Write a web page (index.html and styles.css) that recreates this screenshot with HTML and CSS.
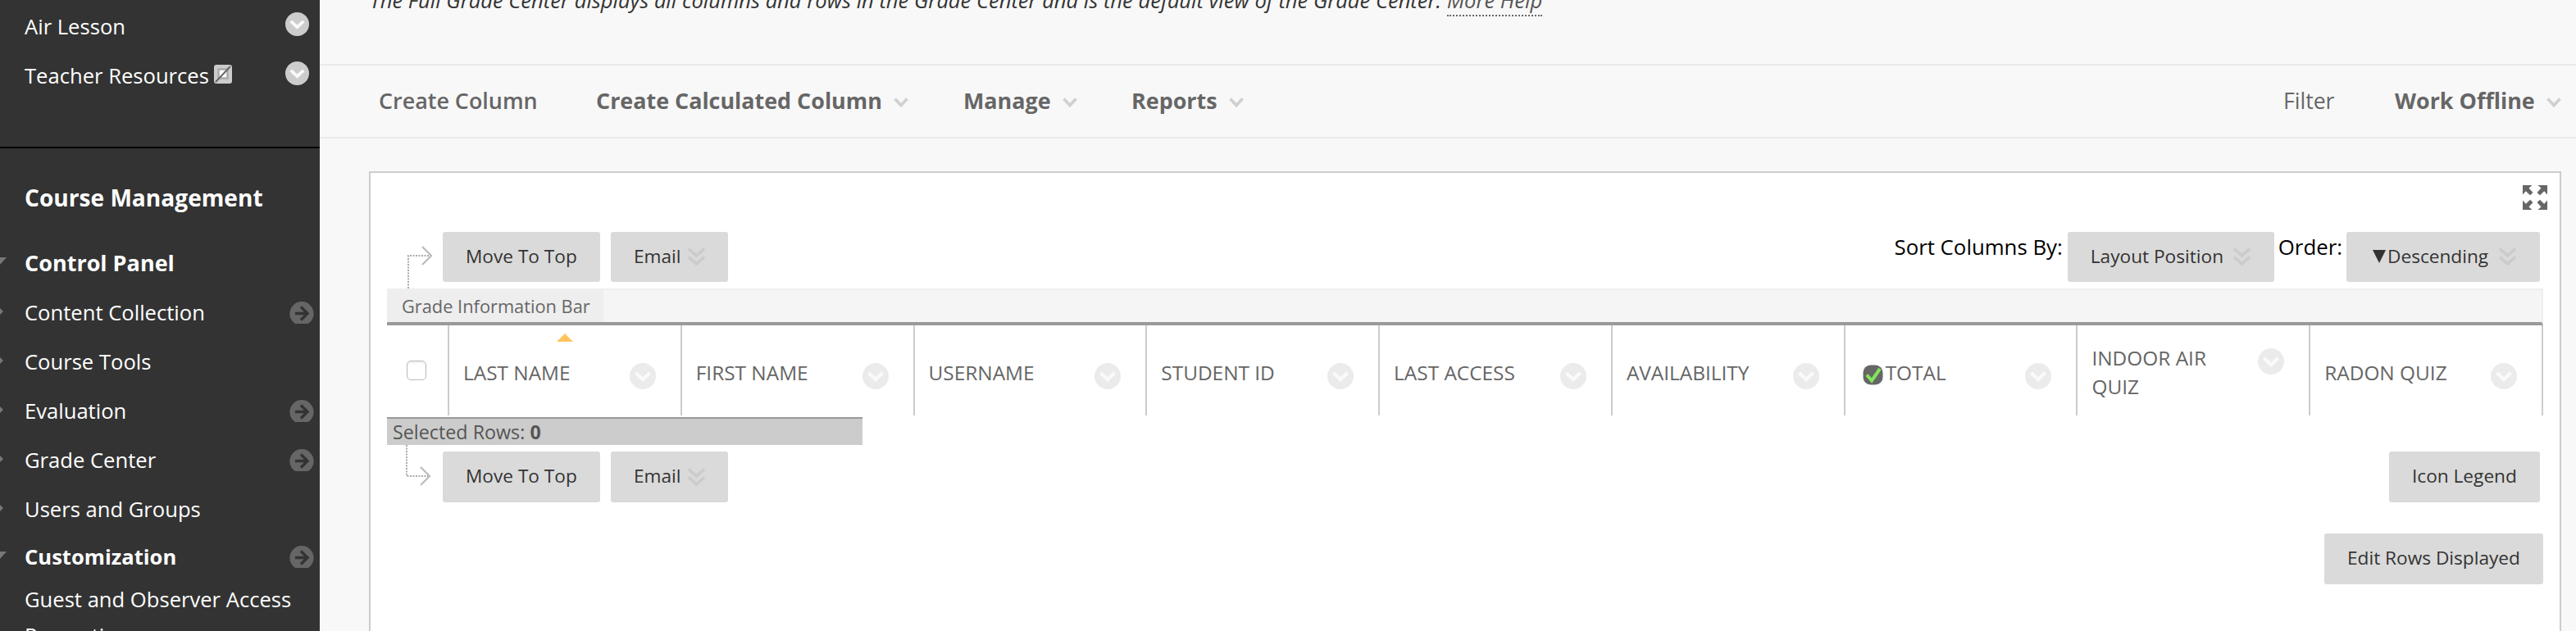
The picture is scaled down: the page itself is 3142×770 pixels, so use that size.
FILE: index.html
```
<!DOCTYPE html>
<html lang="en">
<head>
<meta charset="utf-8">
<title>Full Grade Center</title>
<link rel="stylesheet" href="styles.css">
</head>
<body>
<svg width="0" height="0" class="defs">
  <symbol id="circle-chevron" viewBox="0 0 32 32"><circle cx="16" cy="16" r="16" fill="currentColor"/><path d="M7.500 12l8.500 8 8.500-8" fill="none" stroke="#fafafa" stroke-width="4.200"/></symbol>
  <symbol id="circle-arrow" viewBox="0 0 30 27"><circle cx="15" cy="14.700" r="14.600" fill="#666"/><path d="M7 14.500h15M14 6.500l8 8-8 8" fill="none" stroke="#333" stroke-width="3.400"/></symbol>
  <symbol id="chevron" viewBox="0 0 18 13"><path d="M1.500 1.500L9 9.500l7.500-8" fill="none" stroke="#d0d0d0" stroke-width="3.600"/></symbol>
  <symbol id="double-chevron" viewBox="0 0 21 23"><path d="M1 1.500l9.500 8.500L20 1.500M1 11.500l9.500 8.500L20 11.500" fill="none" stroke="#cbcbcb" stroke-width="3.600"/></symbol>
</svg>
<aside class="sidebar">
  <div class="item first">Air Lesson<svg class="opt"><use href="#circle-chevron"/></svg></div>
  <div class="item">Teacher Resources<svg class="hidden-icon" viewBox="0 0 22 23"><rect width="22" height="23" rx="3" fill="#ccc"/><rect x="5.500" y="5.500" width="11" height="11" fill="#fff" stroke="#aaa" stroke-width="2.500"/><path d="M2 21L20 2" stroke="#666" stroke-width="2"/></svg><svg class="opt"><use href="#circle-chevron"/></svg></div>
  <div class="divider"></div>
  <h2 class="heading">Course Management</h2>
  <div class="item panel-title open">Control Panel</div>
  <div class="item closed">Content Collection<svg class="go"><use href="#circle-arrow"/></svg></div>
  <div class="item closed">Course Tools</div>
  <div class="item closed">Evaluation<svg class="go"><use href="#circle-arrow"/></svg></div>
  <div class="item closed">Grade Center<svg class="go"><use href="#circle-arrow"/></svg></div>
  <div class="item closed">Users and Groups</div>
  <div class="item custom open">Customization<svg class="go"><use href="#circle-arrow"/></svg></div>
  <div class="item sub">Guest and Observer Access</div>
  <div class="item sub last">Properties</div>
</aside>
<main class="main">
  <p class="intro">The Full Grade Center displays all columns and rows in the Grade Center and is the default view of the Grade Center. <a class="help">More Help</a></p>
  <nav class="toolbar">
    <span class="tool create">Create Column</span>
    <span class="tool calc">Create Calculated Column<svg class="chev"><use href="#chevron"/></svg></span>
    <span class="tool manage">Manage<svg class="chev"><use href="#chevron"/></svg></span>
    <span class="tool">Reports<svg class="chev"><use href="#chevron"/></svg></span>
    <span class="tool filter">Filter</span>
    <span class="tool offline">Work Offline<svg class="chev"><use href="#chevron"/></svg></span>
  </nav>
  <section class="panel">
    <div class="expand-row"><svg class="expand" viewBox="0 0 30 30" fill="#666"><path id="corner" d="M0 0h11.500l-4 3.600 5 5.500-3.500 3.200-5.200-5L0 11.500z"/><use href="#corner" transform="matrix(-1 0 0 1 30 0)"/><use href="#corner" transform="matrix(1 0 0 -1 0 30)"/><use href="#corner" transform="matrix(-1 0 0 -1 30 30)"/></svg></div>
    <div class="actions top">
      <svg class="lead" viewBox="0 0 32 54"><path d="M2 53V13H28" fill="none" stroke="#aaa" stroke-width="2" stroke-dasharray="2 1.500"/><path d="M19 2l11 11-11 11" fill="none" stroke="#bbb" stroke-width="2.200"/></svg>
      <span class="btn move">Move To Top</span><span class="btn email">Email<svg class="dbl"><use href="#double-chevron"/></svg></span>
      <span class="label sort">Sort Columns By:</span><span class="btn layout">Layout Position<svg class="dbl"><use href="#double-chevron"/></svg></span>
      <span class="label order">Order:</span><span class="btn desc"><svg class="tri" viewBox="0 0 16 16"><path d="M0 0h16L8 16z" fill="#333"/></svg>Descending<svg class="dbl"><use href="#double-chevron"/></svg></span>
    </div>
    <div class="info-bar"><span class="info-tab">Grade Information Bar</span></div>
    <div class="grid-head">
      <div class="check-cell"><span class="checkbox"></span></div>
      <div class="cell sorted"><span>LAST NAME</span><svg class="menu"><use href="#circle-chevron"/></svg></div>
      <div class="cell"><span>FIRST NAME</span><svg class="menu"><use href="#circle-chevron"/></svg></div>
      <div class="cell"><span>USERNAME</span><svg class="menu"><use href="#circle-chevron"/></svg></div>
      <div class="cell"><span>STUDENT ID</span><svg class="menu"><use href="#circle-chevron"/></svg></div>
      <div class="cell"><span>LAST ACCESS</span><svg class="menu"><use href="#circle-chevron"/></svg></div>
      <div class="cell"><span>AVAILABILITY</span><svg class="menu"><use href="#circle-chevron"/></svg></div>
      <div class="cell total"><svg class="tick" viewBox="0 0 25 25"><rect x=".5" y=".5" width="24" height="24" rx="9" fill="#666"/><path d="M5 12.500l6 7L21 5" fill="none" stroke="#82e55a" stroke-width="4"/></svg><span>TOTAL</span><svg class="menu"><use href="#circle-chevron"/></svg></div>
      <div class="cell two-line"><span>INDOOR AIR<br>QUIZ</span><svg class="menu"><use href="#circle-chevron"/></svg></div>
      <div class="cell"><span>RADON QUIZ</span><svg class="menu"><use href="#circle-chevron"/></svg></div>
    </div>
    <div class="selected">Selected Rows: <b>0</b></div>
    <div class="actions bottom">
      <svg class="lead" viewBox="0 0 32 54"><path d="M2 0V38H28" fill="none" stroke="#aaa" stroke-width="2" stroke-dasharray="2 1.500"/><path d="M19 27l11 11-11 11" fill="none" stroke="#bbb" stroke-width="2.200"/></svg>
      <span class="btn move">Move To Top</span><span class="btn email">Email<svg class="dbl"><use href="#double-chevron"/></svg></span>
      <span class="btn legend">Icon Legend</span>
    </div>
    <div class="rows-row"><span class="btn edit">Edit Rows Displayed</span></div>
  </section>
</main>
</body>
</html>
```
FILE: styles.css
```
* { box-sizing: border-box; }
body { margin: 0; display: flex; width: 3142px; height: 770px; overflow: hidden; background: #f8f8f8; font-family: "Open Sans", sans-serif; }
svg { flex: none; }
.defs { position: absolute; }

/* Course menu */
.sidebar { flex: none; width: 390px; height: 770px; overflow: hidden; background: #333; color: #fff; padding-top: 2px; }
.item { position: relative; display: flex; align-items: center; height: 60px; padding-left: 30px; font-size: 25.6px; white-space: nowrap; }
.opt { width: 29px; height: 29px; margin: 0 13.5px 5px auto; color: #ccc; }
.hidden-icon { width: 22px; height: 23px; margin: 0 0 4px 6px; }
.divider { height: 2px; margin-top: 57px; background: #000; }
.heading { margin: 12px 0 0; padding-left: 30px; font-size: 28.1px; font-weight: 700; line-height: 96px; }
.panel-title { height: 62px; font-size: 27px; font-weight: 700; }
.go { width: 30px; height: 27px; margin: 1px 7px 0 auto; }
.custom { height: 56px; font-weight: 700; }
.sub { height: 48px; }
.last { height: 40px; }
.closed::before { content: ""; position: absolute; left: -5px; top: 20px; border-left: 9px solid #777; border-top: 9px solid transparent; border-bottom: 9px solid transparent; }
.open::before { content: ""; position: absolute; left: -10px; top: 25px; border-top: 10px solid #777; border-left: 9px solid transparent; border-right: 9px solid transparent; }
.custom::before { top: 22px; }

/* Content area */
.main { flex: none; width: 2752px; height: 770px; overflow: hidden; }
.intro { display: flex; align-items: flex-end; height: 78px; margin: 0; padding: 0 0 59px 61px; color: #333; font-size: 25.56px; font-style: italic; line-height: 38px; white-space: pre; }
.help { height: 38px; margin-bottom: -1px; border-bottom: 2px dotted #666; color: #555; line-height: 36px; }
.toolbar { display: flex; align-items: center; height: 91px; padding: 0 0 2px 72px; border-top: 2px solid #eaeaea; border-bottom: 2px solid #eaeaea; color: #666; font-size: 26.9px; font-weight: 700; white-space: nowrap; }
.tool { display: flex; align-items: center; }
.chev { width: 18px; height: 13px; margin: 5px 0 0 14px; }
.create { width: 265px; font-weight: 600; }
.calc { width: 448px; }
.manage { width: 205px; }
.filter { width: 136px; margin-left: auto; font-size: 26.6px; font-weight: 400; }
.offline { width: 221px; }

.panel { width: 2674px; height: 600px; margin: 40px 0 0 60px; padding: 0 20px; background: #fff; border: 2px solid #ccc; }
.expand-row { display: flex; justify-content: flex-end; height: 72px; padding: 15px 0 0; margin-right: -5px; }
.expand { width: 30px; height: 30px; }
.actions { display: flex; }
.top { height: 69px; }
.lead { width: 32px; height: 54px; margin-left: 24px; }
.top .lead { margin-top: 16px; }
.btn { display: flex; align-items: center; height: 61px; padding: 0 0 2px 28px; border-radius: 3px; background: #dadada; color: #333; font-size: 22.65px; line-height: 56px; white-space: nowrap; }
.move { width: 192px; margin-left: 12px; }
.email { width: 143px; margin-left: 13px; }
.dbl { width: 21px; height: 23px; margin: 2px 0 0 8px; }
.label { color: #000; font-size: 25.8px; line-height: 36px; white-space: nowrap; }
.sort { margin-left: auto; }
.top .layout { width: 252px; margin-left: 6px; }
.layout .dbl { margin-left: 12px; }
.order { margin-left: 5px; }
.desc { width: 236px; margin: 0 4px 0 5px; padding-left: 32px; }
.tri { width: 16px; height: 16px; margin-right: 2px; }
.desc .dbl { margin-left: 13px; }

.info-bar { width: 2630px; height: 45px; background: #f5f5f5; border-style: solid; border-width: 2px 2px 4px 0; border-color: #eee #eee #999; }
.info-tab { display: block; width: 264px; height: 39px; padding-left: 18px; background: #eee; color: #666; font-size: 21.8px; line-height: 40px; white-space: nowrap; }

/* Grade grid header */
.grid-head { display: grid; grid-template-columns: 76px repeat(9, minmax(0, 1fr)); width: 2630px; height: 110px; }
.check-cell { padding: 43px 0 0 24px; border-right: 2px solid #ccc; }
.checkbox { display: block; width: 24px; height: 24px; border: 1.5px solid #bbb; border-radius: 5px; box-shadow: inset 0 2px 2px #eee; }
.cell { position: relative; display: flex; align-items: center; padding: 4px 30px 0 17px; border-right: 2px solid #ccc; color: #666; font-size: 24.4px; line-height: 35px; white-space: nowrap; }
.menu { width: 32px; height: 32px; margin: 10px 0 0 auto; color: #ebebeb; }
.sorted::after { content: ""; position: absolute; left: 131px; top: 10px; border-bottom: 10px solid #ffc55c; border-left: 10px solid transparent; border-right: 10px solid transparent; }
.total { padding-left: 21px; }
.tick { width: 25px; height: 25px; margin: 7px 3px 0 0; }
.two-line .menu { margin-top: -26px; }

.selected { width: 580px; height: 34px; margin-top: 2px; padding-left: 7px; border-top: 2px solid #999; background: #ccc; color: #555; font-size: 23.3px; line-height: 32px; }
.bottom { height: 108px; }
.bottom .lead { margin: 0 2px 0 22px; }
.bottom .btn { height: 62px; margin-top: 8px; }
.bottom .legend { width: 184px; margin-left: auto; margin-right: 4px; }
.rows-row { display: flex; justify-content: flex-end; }
.edit { width: 267px; height: 62px; }
```
